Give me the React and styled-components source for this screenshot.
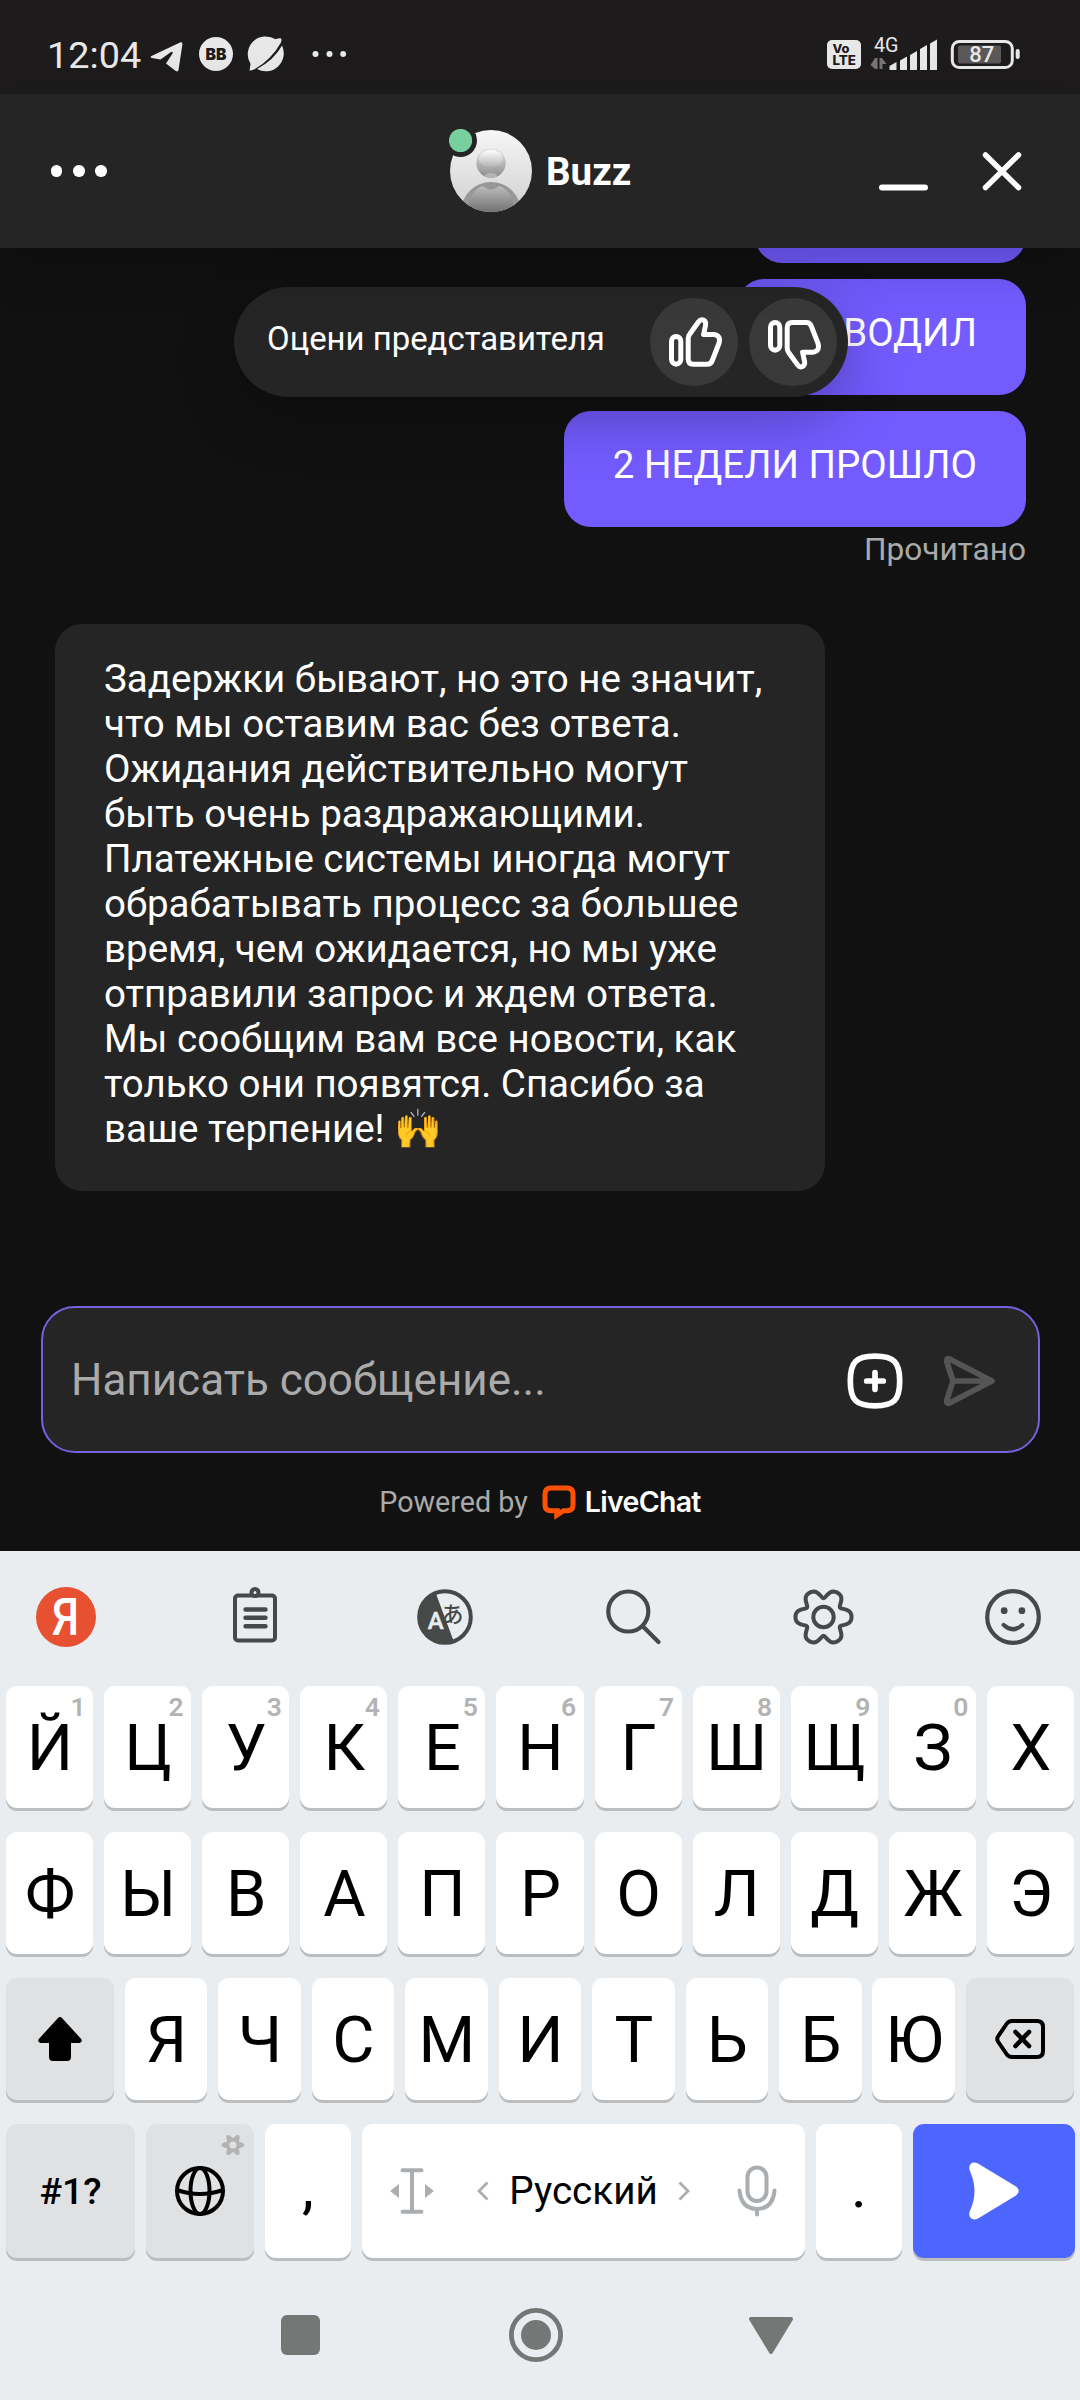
import React from 'react'
import styled, { createGlobalStyle, css } from 'styled-components'

const GlobalStyle = createGlobalStyle`
* { box-sizing: border-box; }
body {
  margin: 0;
  background: #111111;
  font-family: Roboto, "Noto Sans", "Liberation Sans", sans-serif;
}
svg { display: block; flex: none; }
`;

const rowOne = [
    ['Й', '1'], ['Ц', '2'], ['У', '3'], ['К', '4'], ['Е', '5'], ['Н', '6'],
    ['Г', '7'], ['Ш', '8'], ['Щ', '9'], ['З', '0'], ['Х', ''],
]
const rowTwo = 'ФЫВАПРОЛДЖЭ'.split('')
const rowThree = 'ЯЧСМИТЬБЮ'.split('')

const reply = 'Задержки бывают, но это не значит,\nчто мы оставим вас без ответа.\nОжидания действительно могут\nбыть очень раздражающими.\nПлатежные системы иногда могут\nобрабатывать процесс за большее\nвремя, чем ожидается, но мы уже\nотправили запрос и ждем ответа.\nМы сообщим вам все новости, как\nтолько они появятся. Спасибо за\nваше терпение! 🙌'

// closed outline with six rounded teeth
function gearPath(cx, cy, base, amp, flat) {
    const pts = []
    for (let i = 0; i < 120; i++) {
        const a = (i / 120) * Math.PI * 2
        const r = base + amp * Math.cos(6 * a) - flat * Math.cos(12 * a)
        pts.push((cx + r * Math.cos(a)).toFixed(2) + ' ' + (cy + r * Math.sin(a)).toFixed(2))
    }
    return 'M' + pts.join('L') + 'Z'
}

function StatusBar() {
    return (
        <Status>
            <Clock>12:04</Clock>
            <svg width="164" height="40" viewBox="148 34 164 40">
                <path d="M151.5 56 L180 42.6 Q182.8 41.6 182.4 44.5 L178.6 69.5 Q178 72.5 175.4 70.7 L166 63.5 L172.5 53.5 Q173.3 51 171 52 L160.5 59.6 L151.8 58 Q149.6 57 151.5 56Z" fill="#e8e8e8" />
                <circle cx="216" cy="54" r="17" fill="#e8e8e8" />
                <text x="216" y="60.2" textAnchor="middle" fontFamily="Inter" fontWeight="900" fontSize="16.5" textLength="21" lengthAdjust="spacingAndGlyphs" fill="#1d1b1c">BB</text>
                <path d="M249.5 70.5 Q251 71 254.5 69.3 Q271 60 281 42.5 Q282 39.3 280.8 38.3 Q278.5 38 275.5 39.3 A18 18 0 0 0 250.500 64 Q250 68 249.5 70.5Z" fill="#e8e8e8" />
                <path d="M257 69 Q274 60 282 45.5 A18 18 0 0 1 257 69Z" fill="#e8e8e8" />
            </svg>
            <svg width="34" height="8" viewBox="0 0 34 8" fill="#e8e8e8">
                <circle cx="3.5" cy="4" r="3" /><circle cx="17.5" cy="4" r="3" /><circle cx="31.2" cy="4" r="3" />
            </svg>
            <StatusRight>
                <svg width="196" height="40" viewBox="826 34 196 40">
                    <rect x="827" y="40" width="34" height="29" rx="5" fill="#e8e8e8" />
                    <text x="832.5" y="53" fontFamily="Inter" fontWeight="800" fontSize="12" textLength="17" lengthAdjust="spacingAndGlyphs" fill="#1d1b1c">Vo</text>
                    <text x="832.5" y="65.3" fontFamily="Inter" fontWeight="800" fontSize="13" textLength="23.5" lengthAdjust="spacingAndGlyphs" fill="#1d1b1c">LTE</text>
                    <text x="874" y="52" fontSize="20" textLength="24.5" lengthAdjust="spacingAndGlyphs" fill="#e8e8e8">4G</text>
                    <path d="M870.5 65 L874.5 59 V58 H877.5 V69 H875 Z M879.5 58 H882 L886.5 64 H882.5 V69 H879.5Z" fill="#767475" />
                    <path d="M889.5 70 V66 L896.5 62 V70Z M900 70 V60.5 L907 56.5 V70Z M910 70 V55 L917 51 V70Z M920 70 V49 L927 45 V70Z M930 70 V43.5 L937 39.5 V70Z" fill="#e8e8e8" />
                    <rect x="952.3" y="41.500" width="60" height="26" rx="7" fill="none" stroke="#e8e8e8" strokeWidth="3" />
                    <rect x="958" y="45.500" width="43" height="18" rx="2" fill="#5a5859" />
                    <rect x="1015.7" y="49" width="4" height="10" rx="2" fill="#e8e8e8" />
                    <text x="981.7" y="62.3" textAnchor="middle" fontSize="22" fontWeight="500" fill="#e8e8e8">87</text>
                </svg>
            </StatusRight>
        </Status>
    )
}

function ChatHeader() {
    return (
        <Header>
            <MenuDots><i /><i /><i /></MenuDots>
            <Agent>
                <svg width="84" height="84" viewBox="0 0 84 84">
                    <defs>
                        <linearGradient id="bg" x1="0" y1="0" x2="0" y2="1">
                            <stop offset="0" stopColor="#f7f7f7" /><stop offset="1" stopColor="#cfcfcf" />
                        </linearGradient>
                        <linearGradient id="head" x1="0" y1="0" x2="0" y2="1">
                            <stop offset="0" stopColor="#e6e6e6" /><stop offset="1" stopColor="#8a8a8a" />
                        </linearGradient>
                        <linearGradient id="shine" x1="0" y1="0" x2="0" y2="1">
                            <stop offset="0" stopColor="#ffffff" /><stop offset="1" stopColor="#b5b5b5" />
                        </linearGradient>
                        <linearGradient id="torso" x1="0" y1="0" x2="0" y2="1">
                            <stop offset="0" stopColor="#bcbcbc" /><stop offset="1" stopColor="#6f6f6f" />
                        </linearGradient>
                        <clipPath id="round"><circle cx="42" cy="42" r="41" /></clipPath>
                    </defs>
                    <g clipPath="url(#round)">
                        <rect width="84" height="84" fill="url(#bg)" />
                        <circle cx="42" cy="34" r="14.7" fill="url(#head)" />
                        <ellipse cx="42" cy="29.5" rx="12" ry="8.5" fill="url(#shine)" />
                        <ellipse cx="42" cy="46.5" rx="6" ry="2.5" fill="#b4b4b4" />
                        <circle cx="42" cy="83" r="30" fill="#979797" />
                        <path d="M18 84 Q20 61 34 57 Q42 64 50 57 Q64 61 66 84Z" fill="url(#torso)" />
                    </g>
                    <circle cx="11.5" cy="11.5" r="16.5" fill="#252525" />
                    <circle cx="11.5" cy="11.5" r="11.6" fill="#79d09f" />
                </svg>
                Buzz
            </Agent>
            <HeaderActions>
                <svg width="52" height="52" viewBox="0 0 52 52" stroke="#fff" strokeWidth="6" strokeLinecap="round">
                    <path d="M4 42.5 H47" />
                </svg>
                <svg width="44" height="52" viewBox="0 0 44 52" stroke="#fff" strokeWidth="5.5" strokeLinecap="round">
                    <path d="M5.5 10 L38.5 42.5 M38.5 10 L5.5 42.5" />
                </svg>
            </HeaderActions>
        </Header>
    )
}

function Thumb({ down }) {
    return (
        <ThumbButton>
            <svg width="88" height="88" viewBox="0 0 88 88" fill="none" stroke="#fff" strokeWidth="5" strokeLinejoin="round">
                <g transform={down ? 'matrix(1 0 0 -1 0 90.7)' : undefined}>
                    <rect x="21.5" y="38.5" width="9.3" height="27.7" rx="4.65" />
                    <path d="M38.2 61 V40.5 Q38.2 38 39.8 36 L48.6 23.8 Q50.8 20.7 53.8 22.3 Q56.1 23.6 55.6 27 L53.6 36.5 H64 Q71 37.5 69.1 45 L62.3 62.5 Q60.9 66.2 57.5 66.2 H43.2 Q38.2 66.2 38.2 61Z" />
                </g>
            </svg>
        </ThumbButton>
    )
}

function Chat() {
    return (
        <Messages>
            <Mine $first />
            <Mine>ВЫВОДИЛ</Mine>
            <Mine>2 НЕДЕЛИ ПРОШЛО</Mine>
            <ReadMark>Прочитано</ReadMark>
            <Theirs>{reply}</Theirs>
            <RateBar>
                <span>Оцени представителя</span>
                <Thumb />
                <Thumb down />
            </RateBar>
        </Messages>
    )
}

function Footer() {
    return (
        <>
            <Composer>
                <Placeholder>Написать сообщение...</Placeholder>
                <svg width="56" height="56" viewBox="0 0 56 56" fill="none" stroke="#fff" strokeWidth="5.7" strokeLinecap="round">
                    <path d="M28 3.2 C47 3.2 52.7 9 52.7 28 C52.7 47 47 52.8 28 52.8 C9 52.8 3.3 47 3.3 28 C3.3 9 9 3.2 28 3.2Z" />
                    <path d="M28 19.7 V36.3 M19.7 28 H36.3" />
                </svg>
                <svg width="54" height="52" viewBox="0 0 54 52" fill="none" stroke="#555" strokeWidth="5.7" strokeLinecap="round" strokeLinejoin="round">
                    <path d="M11 26 L4.7 6.5 Q4.2 2.8 7.5 4 L50 26 L7.5 48 Q4.2 49.2 4.7 45.5 L11 26 H46" />
                </svg>
            </Composer>
            <Powered>
                Powered by
                <svg width="34" height="35" viewBox="0 0 34 35">
                    <path d="M13 25.7 H9 Q3 25.7 3 20 V9 Q3 3 9 3 H25 Q31 3 31 9 V20 Q31 25.7 25 25.7 H21.5 L15 30 V25.7Z" fill="none" stroke="#ff5100" strokeWidth="5" />
                    <path d="M12.5 24 H18 V29 L12.5 34Z" fill="#ff5100" />
                </svg>
                <Brand>LiveChat</Brand>
            </Powered>
        </>
    )
}

function Toolbar() {
    return (
        <Tools>
            <svg width="60" height="60" viewBox="0 0 60 60">
                <circle cx="30" cy="30" r="30" fill="#e85032" />
                <text x="16" y="48.3" fontSize="51" fontWeight="500" textLength="27" lengthAdjust="spacingAndGlyphs" fill="#fff">Я</text>
            </svg>
            <svg width="60" height="60" viewBox="0 0 60 60" fill="none" stroke="#474948" strokeWidth="4" strokeLinecap="round">
                <rect x="10" y="8.5" width="40" height="45" rx="3" />
                <path d="M20.5 22.5 H40.5 M20.5 30.8 H40.5 M20.5 39.2 H40.5" strokeWidth="4.4" />
                <circle cx="30" cy="5.5" r="3.5" fill="#e9edf0" />
            </svg>
            <svg width="60" height="60" viewBox="-1 0 60 60">
                <circle cx="30" cy="30" r="25.8" fill="none" stroke="#474948" strokeWidth="4" />
                <path d="M20.3 5 L39 55 A26.5 26.5 0 1 1 20.3 5Z" fill="#474948" />
                <text x="12.8" y="41.7" fontSize="24" fontWeight="500" fill="#e9edf0" stroke="#e9edf0" strokeWidth="0.5">A</text>
                <text x="26.5" y="35" fontSize="22" fontFamily="Noto Sans CJK JP" fontWeight="500" fill="#474948">あ</text>
            </svg>
            <svg width="60" height="60" viewBox="0 0 60 60" fill="none" stroke="#474948" strokeWidth="4.2" strokeLinecap="round">
                <circle cx="25.3" cy="24.5" r="20" />
                <path d="M40 39.5 L55.5 55" />
            </svg>
            <svg width="62" height="60" viewBox="-1 0 62 60" fill="none" stroke="#474948" strokeWidth="4">
                <path d={gearPath(30.5, 30, 24.4, 4.5, 0.9)} />
                <circle cx="30.5" cy="30" r="10.2" />
            </svg>
            <svg width="60" height="60" viewBox="0 0 60 60" fill="none" stroke="#474948" strokeWidth="4.2" strokeLinecap="round">
                <circle cx="30" cy="30" r="25.8" />
                <circle cx="21.2" cy="23.7" r="3.4" fill="#474948" stroke="none" />
                <circle cx="38.9" cy="23.7" r="3.4" fill="#474948" stroke="none" />
                <path d="M20.7 38 Q30 46.5 39.3 38" />
            </svg>
        </Tools>
    )
}

function Keyboard() {
    return (
        <Board>
            <Toolbar />
            <KeyRow>
                {rowOne.map(([letter, digit]) => (
                    <Key key={letter}>{letter}{digit && <Hint>{digit}</Hint>}</Key>
                ))}
            </KeyRow>
            <KeyRow>
                {rowTwo.map(letter => <Key key={letter}>{letter}</Key>)}
            </KeyRow>
            <KeyRow $gap={10.6}>
                <Key $w={108} $dim>
                    <svg width="46" height="46" viewBox="0 0 46 46">
                        <path d="M21 2 Q23 0 25 2 L44.2 23 Q46 26 42.5 27 H34 V41 Q34 45 30 45 H16 Q12 45 12 41 V27 H3.5 Q0 26 1.8 23Z" />
                    </svg>
                </Key>
                {rowThree.map(letter => <Key key={letter}>{letter}</Key>)}
                <Key $w={108} $dim>
                    <svg width="50" height="40" viewBox="0 0 50 40" fill="none" stroke="#000" strokeWidth="4" strokeLinejoin="round" strokeLinecap="round">
                        <path d="M17 2 H42 Q48 2 48 8 V32 Q48 38 42 38 H17 Q13.5 38 11.5 35 L3 22.5 Q1.5 20 3 17.5 L11.5 5 Q13.5 2 17 2Z" />
                        <path d="M20.5 13 L34 27 M34 13 L20.5 27" strokeWidth="4.6" />
                    </svg>
                </Key>
            </KeyRow>
            <KeyRow $h={134} $wide>
                <Key $w={129} $dim $symbols>#1?</Key>
                <Key $w={108} $dim>
                    <svg width="50" height="50" viewBox="0 0 50 50" fill="none" stroke="#000" strokeWidth="4">
                        <circle cx="25" cy="25" r="23" />
                        <ellipse cx="25" cy="25" rx="9.5" ry="23" />
                        <path d="M2 24 Q25 32 48 24" />
                    </svg>
                    <Corner>
                        <svg width="24" height="22" viewBox="0 0 24 22">
                            <path d={gearPath(12, 11, 9.2, 2.2, 0)} fill="#b3b3b3" />
                            <circle cx="12" cy="11" r="3.6" fill="#dfe1e3" />
                        </svg>
                    </Corner>
                </Key>
                <Key $w={86} $punct>,</Key>
                <Space>
                    <svg width="46" height="46" viewBox="0 0 46 46" fill="none" stroke="#aaaeb1" strokeWidth="4" strokeLinecap="round">
                        <path d="M13.5 2.2 H32.5 M13.5 43.8 H32.5 M23 2.2 V43.8" />
                        <path d="M1 23 L10 16 V30Z M45 23 L36 16 V30Z" fill="#aaaeb1" stroke="none" />
                    </svg>
                    <Lang>
                        <svg width="12" height="20" viewBox="0 0 12 20" fill="none" stroke="#aaaeb1" strokeWidth="2.8"><path d="M10.5 1.5 L2 10 L10.5 18.5" /></svg>
                        Русский
                        <svg width="12" height="20" viewBox="0 0 12 20" fill="none" stroke="#aaaeb1" strokeWidth="2.8"><path d="M1.5 1.5 L10 10 L1.5 18.5" /></svg>
                    </Lang>
                    <svg width="40" height="52" viewBox="0 0 40 52" fill="none" stroke="#aaaeb1" strokeWidth="4" strokeLinecap="round">
                        <rect x="10.5" y="2.5" width="19" height="33.5" rx="9.5" />
                        <path d="M2.5 25.5 Q4 43.5 20 44 Q36 43.5 37.5 25.5 M20 44 V49.5" />
                    </svg>
                </Space>
                <Key $w={86} $punct>.</Key>
                <Key $w={162} $accent>
                    <svg width="50" height="58" viewBox="0 0 50 58">
                        <path d="M9 1.6 L47 24.5 Q52.5 29 47 33.5 L9 56.4 Q2 59.5 0.3 53 Q0 50.5 1.5 47.5 Q9.5 29 1.5 10.5 Q0 7.5 0.3 5 Q2 -1.5 9 1.6Z" fill="#fff" />
                    </svg>
                </Key>
            </KeyRow>
            <NavBar>
                <svg width="39" height="54" viewBox="0 0 39 54"><rect y="7" width="39" height="40" rx="6" fill="#747775" /></svg>
                <svg width="54" height="54" viewBox="0 0 54 54">
                    <circle cx="27" cy="27" r="24.6" fill="none" stroke="#747775" strokeWidth="4.8" />
                    <circle cx="27" cy="27" r="15" fill="#747775" />
                </svg>
                <svg width="46" height="54" viewBox="0 0 46 54">
                    <path d="M3 11 H43 L23 44Z" fill="#747775" stroke="#747775" strokeWidth="4" strokeLinejoin="round" />
                </svg>
            </NavBar>
        </Board>
    )
}

function App() {
    return (
        <Phone>
            <GlobalStyle />
            <StatusBar />
            <ChatHeader />
            <Chat />
            <Footer />
            <Keyboard />
        </Phone>
    )
}

export default App

const Phone = styled.div`
width: 1080px;
height: 2400px;
overflow: hidden;
display: flex;
flex-direction: column;
background: #111111;
color: #fff;
`;
const Status = styled.div`
height: 94px;
flex: none;
display: flex;
align-items: center;
padding: 14px 58px 0 47px;
background: #1d1b1c;
color: #e8e8e8;
`;
const Clock = styled.div`
width: 101px;
font-size: 37.8px;
line-height: 44px;
padding-top: 1px;
`;
const StatusRight = styled.div`
margin-left: auto;
`;
const Header = styled.div`
height: 154px;
flex: none;
display: grid;
grid-template-columns: 398px 1fr auto;
align-items: center;
padding: 0 56px 0 51px;
background: #252525;
position: relative;
z-index: 2;
box-shadow: 0 14px 49px rgba(0, 0, 0, 0.24);
`;
const MenuDots = styled.div`
display: flex;
gap: 10.8px;
i {
  width: 11.4px;
  height: 11.4px;
  border-radius: 50%;
  background: #fff;
}
`;
const Agent = styled.div`
display: flex;
align-items: center;
gap: 13px;
font-size: 38.5px;
font-weight: 700;
`;
const HeaderActions = styled.div`
display: flex;
gap: 50px;
`;

const Messages = styled.div`
height: 1058px;
flex: none;
position: relative;
overflow: hidden;
display: flex;
flex-direction: column;
padding: 0 54px 0 55px;
font-size: 38.5px;
line-height: 44.95px;
`;
const Mine = styled.div`
align-self: flex-end;
flex: none;
height: 116.5px;
padding: 32.5px 49px 0;
margin: ${p => (p.$first ? '-101.5px' : '0')} 0 15.5px;
min-width: ${p => (p.$first ? '271px' : '0')};
border-radius: 27px;
background: #735bff;
`;
const ReadMark = styled.div`
align-self: flex-end;
margin-top: -11px;
font-size: 31.6px;
line-height: 36px;
color: #aaaaaa;
`;
const Theirs = styled.div`
width: 770px;
margin-top: 56.5px;
padding: 33px 20px 40px 49px;
border-radius: 27px;
background: #252525;
white-space: pre;
`;
const RateBar = styled.div`
position: absolute;
left: 234px;
top: 39px;
width: 614px;
height: 110px;
padding: 0 11px 0 33px;
display: flex;
align-items: center;
gap: 11px;
border-radius: 55px;
background: #252525;
box-shadow: 0 20px 60px rgba(0, 0, 0, 0.28);
font-size: 32.9px;
span {
  flex: 1;
  padding-bottom: 6px;
  white-space: nowrap;
}
`;
const ThumbButton = styled.div`
width: 88px;
height: 88px;
border-radius: 50%;
background: #393939;
`;

const Composer = styled.div`
height: 147px;
flex: none;
margin: 0 40px 0 41px;
padding: 3px 42px 0 28px;
display: flex;
align-items: center;
border: 2px solid #7661de;
border-radius: 34px;
background: #252525;
svg + svg { margin-left: 39px; }
`;
const Placeholder = styled.div`
flex: 1;
padding-bottom: 3px;
font-size: 44px;
color: #aaaaaa;
`;
const Powered = styled.div`
height: 98px;
flex: none;
display: flex;
justify-content: center;
align-items: center;
padding-bottom: 1px;
font-size: 28.7px;
color: #aaaaaa;
svg { margin: 1px 9px 0 14px; }
`;
const Brand = styled.div`
font-family: Inter, sans-serif;
font-size: 28.5px;
font-weight: 600;
letter-spacing: -0.7px;
color: #fff;
`;

const Board = styled.div`
flex: 1;
padding: 0 6px;
background: #e9edf0;
color: #000;
`;
const Tools = styled.div`
height: 135px;
display: flex;
justify-content: space-between;
align-items: center;
padding: 0 31px 3px 30px;
`;
const KeyRow = styled.div`
display: flex;
gap: ${p => p.$gap || 11}px;
height: ${p => p.$h || 122}px;
margin: 0 ${p => (p.$wide ? '-1px' : '0')} 24px 0;
`;
const Key = styled.div`
position: relative;
flex: ${p => (p.$w ? `0 0 ${p.$w}px` : '1 1 0')};
min-width: 0;
padding: ${p => (p.$w ? '0' : '2px 0 0 1px')};
display: flex;
justify-content: center;
align-items: center;
border-radius: 11px;
background: ${p => (p.$accent ? '#4d66ff' : p.$dim ? '#dfe1e3' : '#fff')};
box-shadow: 0 3px 0 #bbbdbf;
font-size: 65px;
line-height: 76px;
${p => p.$symbols && css`
font-size: 37.5px;
font-weight: 500;
`}
${p => p.$punct && css`
font-size: 60px;
padding-bottom: 8px;
`}
`;
const Hint = styled.span`
position: absolute;
top: 5px;
right: 7.5px;
font-size: 26.5px;
line-height: 32px;
font-weight: 600;
color: #b3b3b3;
`;
const Corner = styled.span`
position: absolute;
top: 10px;
right: 9px;
`;
const Space = styled(Key)`
flex: 1 1 0;
justify-content: space-between;
padding: 0 28px 0 27px;
`;
const Lang = styled.div`
display: flex;
align-items: center;
gap: 20px;
margin-right: 5px;
font-size: 38.6px;
`;
const NavBar = styled.div`
display: flex;
justify-content: space-between;
padding: 26px 280px 0 275px;
svg:nth-child(2) { margin-left: 4px; }
`;
